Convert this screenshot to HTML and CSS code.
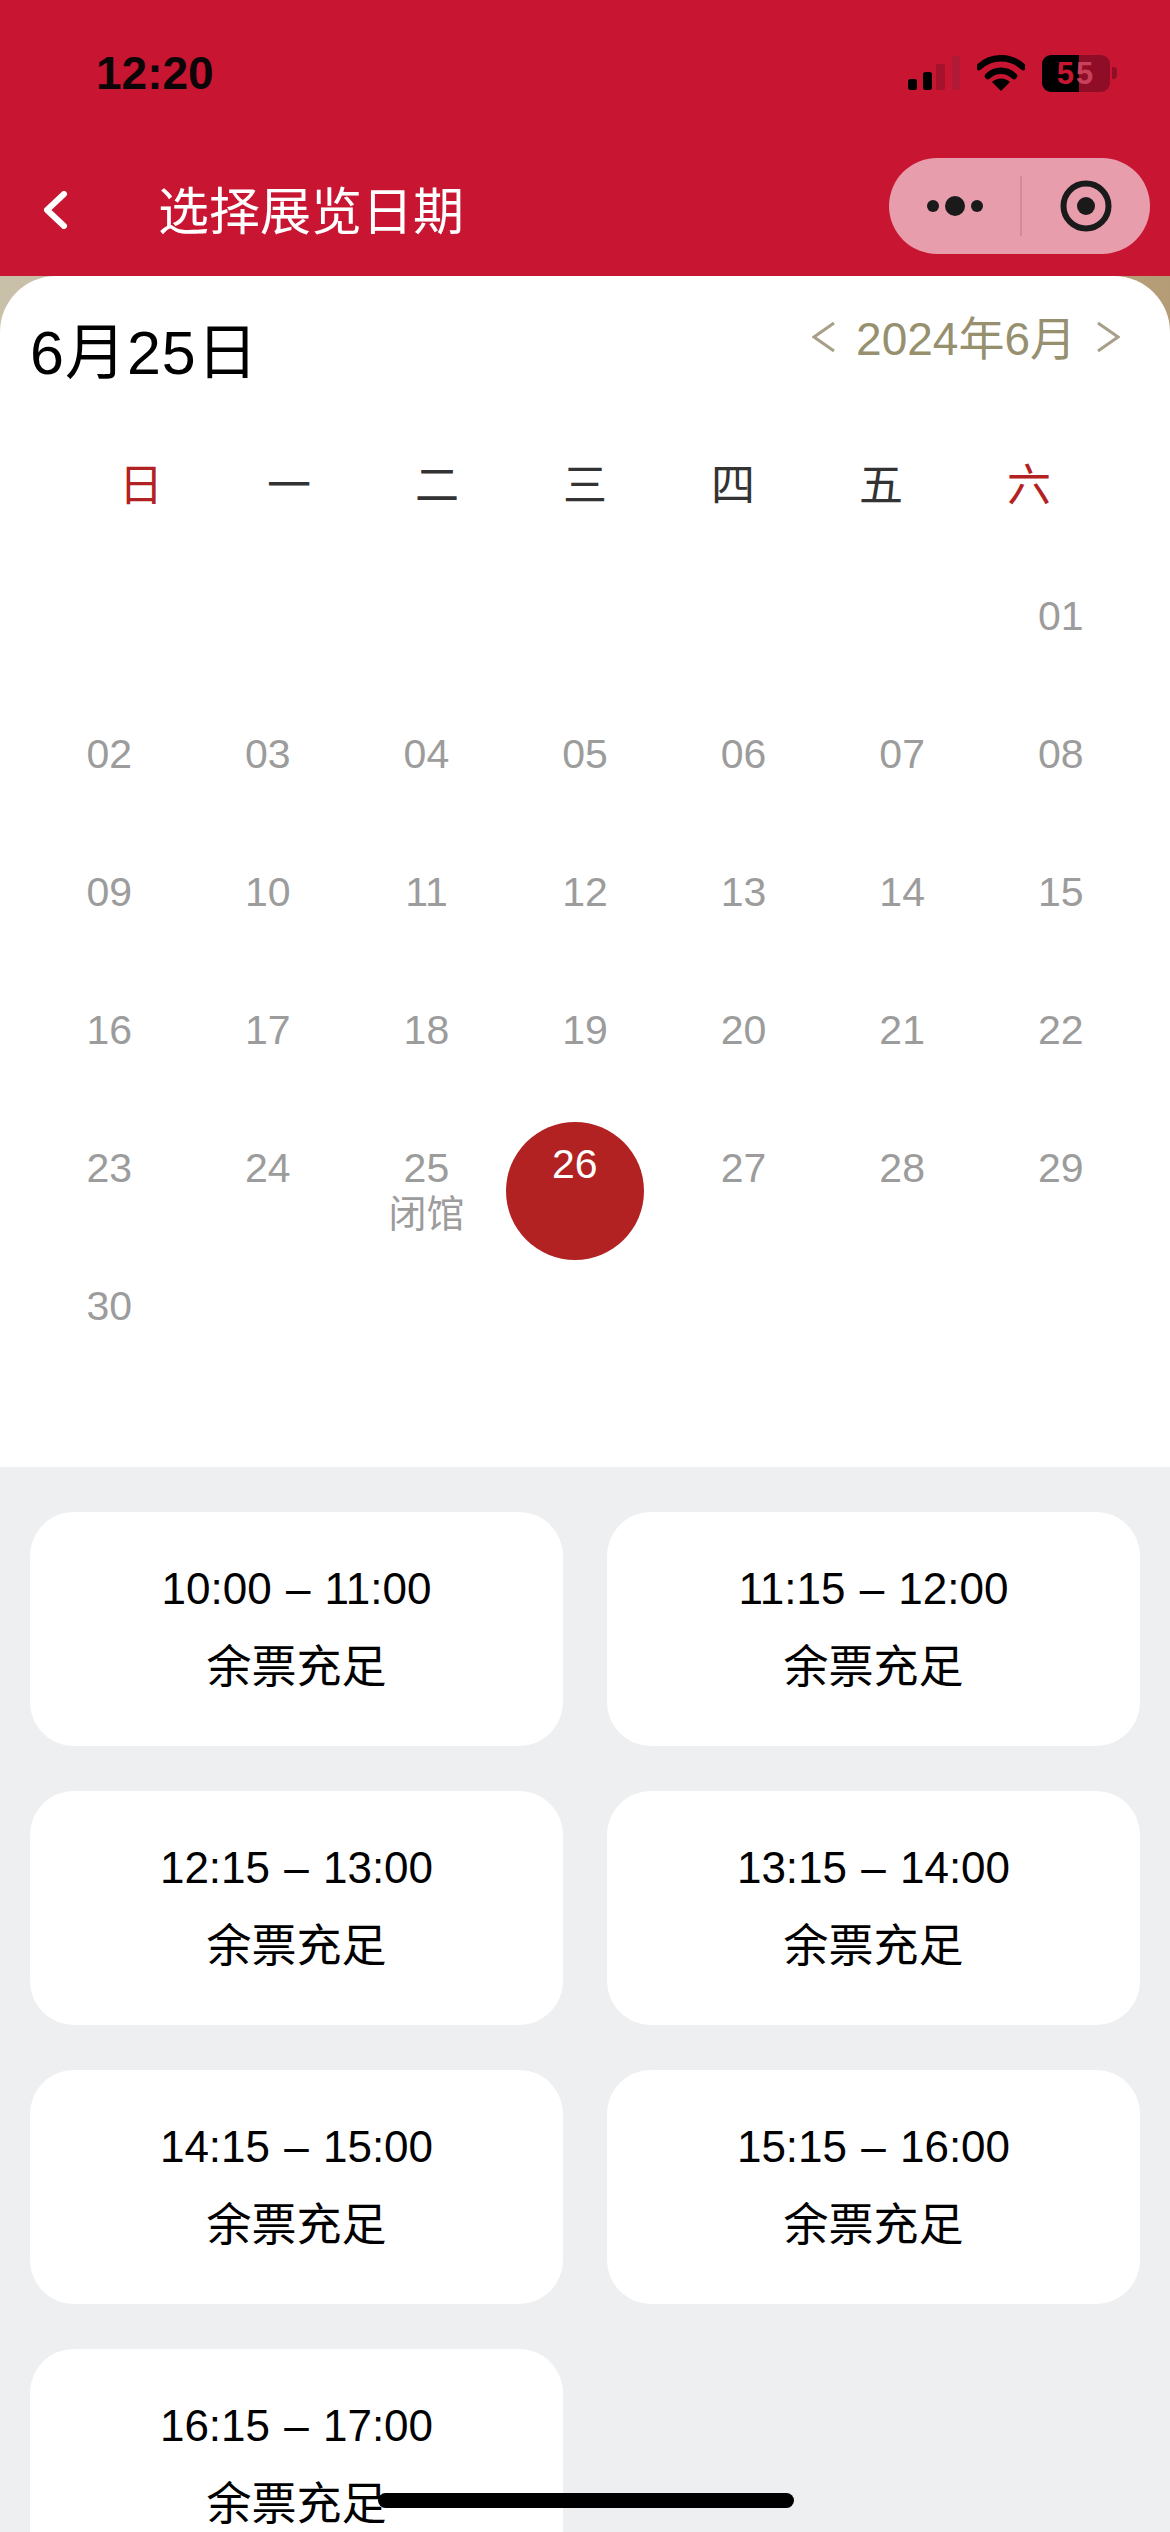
FILE: index.html

```html
<!DOCTYPE html>
<html lang="zh-CN">
<head>
  <meta charset="UTF-8">
  <title>选择展览日期</title>
  <meta name="viewport" content="width=device-width, initial-scale=1.0"/>
  <link rel="stylesheet" href="styles.css">
</head>
<body>

<header>
  <div class="status">
    <span class="clock">12:20</span>
    <div class="status-icons">
      <svg class="signal" width="52" height="36" viewBox="0 0 52 36">
        <rect x="0" y="24" width="9" height="11" rx="2.5" fill="#000"/>
        <rect x="15" y="17" width="9" height="18" rx="2.5" fill="#000"/>
        <rect x="28" y="9" width="9" height="26" rx="2" fill="#a5122e"/>
        <rect x="44" y="1" width="8" height="34" rx="2" fill="#b01a36"/>
      </svg>
      <svg class="wifi" width="48" height="36" viewBox="0 0 48 36">
        <path d="M2 12 A32 32 0 0 1 46 12" fill="none" stroke="#000" stroke-width="6.5" stroke-linecap="round"/>
        <path d="M11 21 A19 19 0 0 1 37 21" fill="none" stroke="#000" stroke-width="6.5" stroke-linecap="round"/>
        <path d="M24 36 L15 27 A13 13 0 0 1 33 27 Z" fill="#000"/>
      </svg>
      <div class="battery"><span>5</span><span class="dim">5</span></div>
      <div class="battery-nub"></div>
    </div>
  </div>
  <div class="titlebar">
    <svg class="back" width="26" height="38" viewBox="0 0 26 38">
      <path d="M22 3 L5 19 L22 35" fill="none" stroke="#fff" stroke-width="6" stroke-linecap="round" stroke-linejoin="round"/>
    </svg>
    <h1>选择展览日期</h1>
    <div class="capsule">
      <svg class="capsule-more" width="66" height="24" viewBox="0 0 66 24">
        <circle cx="7" cy="12" r="6" fill="#1a1a1a"/>
        <circle cx="29" cy="12" r="10" fill="#1a1a1a"/>
        <circle cx="51" cy="12" r="6" fill="#1a1a1a"/>
      </svg>
      <div class="capsule-line"></div>
      <svg class="capsule-close" width="52" height="52" viewBox="0 0 52 52">
        <circle cx="26" cy="26" r="22.5" fill="none" stroke="#1a1a1a" stroke-width="6"/>
        <circle cx="26" cy="26" r="9" fill="#1a1a1a"/>
      </svg>
    </div>
  </div>
</header>

<div class="backdrop">
  <section class="calendar">
    <div class="cal-top">
      <h2>6月25日</h2>
      <div class="month-switch">
        <svg width="24" height="32" viewBox="0 0 24 32"><path d="M22 2 L2 16 L22 30" fill="none" stroke="#a89f88" stroke-width="3"/></svg>
        <span>2024年6月</span>
        <svg width="24" height="32" viewBox="0 0 24 32"><path d="M2 2 L22 16 L2 30" fill="none" stroke="#a89f88" stroke-width="3"/></svg>
      </div>
    </div>

    <div class="week">
      <span class="red">日</span><span>一</span><span>二</span><span>三</span><span>四</span><span>五</span><span class="red">六</span>
    </div>

    <div class="days">
      <div class="day first">01</div>
      <div class="day">02</div><div class="day">03</div><div class="day">04</div><div class="day">05</div><div class="day">06</div><div class="day">07</div><div class="day">08</div>
      <div class="day">09</div><div class="day">10</div><div class="day">11</div><div class="day">12</div><div class="day">13</div><div class="day">14</div><div class="day">15</div>
      <div class="day">16</div><div class="day">17</div><div class="day">18</div><div class="day">19</div><div class="day">20</div><div class="day">21</div><div class="day">22</div>
      <div class="day">23</div><div class="day">24</div><div class="day">25<div class="note">闭馆</div></div><div class="day selected">26</div><div class="day">27</div><div class="day">28</div><div class="day">29</div>
      <div class="day">30</div>
    </div>
  </section>
</div>

<section class="slots">
  <div class="slot"><p class="time">10:00 – 11:00</p><p>余票充足</p></div>
  <div class="slot"><p class="time">11:15 – 12:00</p><p>余票充足</p></div>
  <div class="slot"><p class="time">12:15 – 13:00</p><p>余票充足</p></div>
  <div class="slot"><p class="time">13:15 – 14:00</p><p>余票充足</p></div>
  <div class="slot"><p class="time">14:15 – 15:00</p><p>余票充足</p></div>
  <div class="slot"><p class="time">15:15 – 16:00</p><p>余票充足</p></div>
  <div class="slot"><p class="time">16:15 – 17:00</p><p>余票充足</p></div>
</section>

<div class="home-bar"></div>

</body>
</html>
```

FILE: styles.css

```css
html, body {
  height: 2532px;
  overflow: hidden;
}
body {
  font-family: "Liberation Sans", "Noto Sans CJK SC", sans-serif;
  margin: 0;
  padding: 0;
  background-color: #eeeff1;
  color: #000;
  position: relative;
}
header {
  background-color: #c81532;
  height: 276px;
}
.status {
  height: 146px;
  display: flex;
  align-items: center;
  justify-content: space-between;
  padding: 0 53px 0 96px;
}
.clock {
  font-size: 46px;
  font-weight: bold;
  color: #0b0508;
}
.status-icons {
  display: flex;
  align-items: center;
}
.signal {
  margin-right: 17px;
}
.wifi {
  margin-right: 17px;
}
.battery {
  width: 68px;
  height: 37px;
  border-radius: 9px;
  background: linear-gradient(to right, #000 54%, #8f0d26 54%);
  color: #c81532;
  font-size: 31px;
  font-weight: bold;
  line-height: 37px;
  letter-spacing: 2px;
  text-align: center;
}
.battery .dim {
  color: #c8405a;
}
.battery-nub {
  width: 5px;
  height: 12px;
  margin-left: 2px;
  border-radius: 0 4px 4px 0;
  background-color: #8f0d26;
}
.titlebar {
  height: 130px;
  display: flex;
  align-items: center;
  padding: 0 20px 0 42px;
}
.back {
  margin-right: 90px;
  margin-bottom: 2px;
}
h1 {
  margin: 0 0 7px;
  flex: 1;
  color: #fff;
  font-size: 51px;
  font-weight: 400;
}
.capsule {
  width: 261px;
  height: 96px;
  border-radius: 48px;
  background-color: #e89dac;
  display: flex;
  align-items: center;
  margin-bottom: 10px;
}
.capsule-more {
  margin-left: 37px;
}
.capsule-line {
  width: 2px;
  height: 60px;
  margin-left: 28px;
  background-color: #d58a99;
}
.capsule-close {
  margin-left: 38px;
}
.backdrop {
  background: linear-gradient(to right, #c9c0aa, #c4ae88 60%, #b49c76);
}
.calendar {
  background-color: #fff;
  border-radius: 56px 56px 0 0;
  height: 1191px;
  padding: 0 30px;
  box-sizing: border-box;
}
.cal-top {
  display: flex;
  justify-content: space-between;
  padding-top: 39px;
  height: 118px;
  box-sizing: border-box;
}
h2 {
  margin: 0;
  font-size: 61px;
  font-weight: 400;
  line-height: 76px;
  letter-spacing: 1px;
}
.month-switch {
  display: flex;
  align-items: center;
  gap: 20px;
  height: 50px;
  margin-top: -5px;
  padding-right: 20px;
  color: #96906f;
  font-size: 46px;
}
.month-switch svg {
  margin-top: 3px;
}
.week {
  display: grid;
  grid-template-columns: repeat(7, 148px);
  padding: 60px 0 0 37px;
  height: 116px;
  box-sizing: border-box;
  font-size: 44px;
  line-height: 64px;
  text-align: center;
  color: #333;
}
.week .red {
  color: #b22222;
}
.days {
  display: grid;
  grid-template-columns: repeat(7, 1fr);
  grid-auto-rows: 138px;
  margin-top: 60px;
  color: #9c9c9c;
  font-size: 41px;
  line-height: 45px;
  text-align: center;
}
.day {
  padding-top: 24px;
  box-sizing: border-box;
}
.note {
  font-size: 38px;
  margin-top: 1px;
}
.first {
  grid-column-start: 7;
}
.selected {
  width: 138px;
  height: 138px;
  border-radius: 50%;
  padding-top: 20px;
  background-color: #b22222;
  color: #fff;
}
.slots {
  display: grid;
  grid-template-columns: 533px 533px;
  grid-auto-rows: 234px;
  gap: 45px 44px;
  padding: 45px 30px 0;
}
.slot {
  background-color: #fff;
  border-radius: 44px;
  padding-top: 38px;
  text-align: center;
  font-size: 45px;
  line-height: 80px;
}
.slot p {
  margin: 0;
}
.slot .time {
  font-size: 44px;
  line-height: 78px;
  word-spacing: 2px;
}
.home-bar {
  position: absolute;
  left: 378px;
  top: 2493px;
  width: 416px;
  height: 15px;
  border-radius: 8px;
  background-color: #000;
}
```
